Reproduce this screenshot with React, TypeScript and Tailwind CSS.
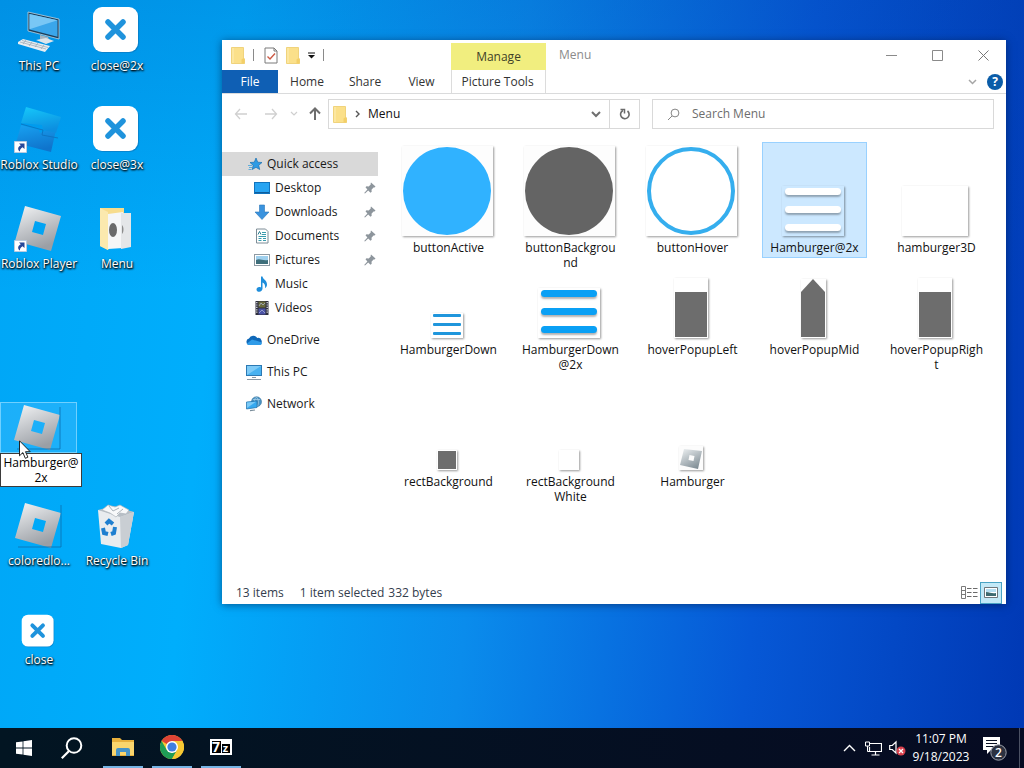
import type { ReactNode } from "react";
import clsx from "clsx";

/* ---------- icons ---------- */

function FolderIcon({ className = "w-[14px] h-[17px]" }: { className?: string }) {
  return (
    <svg viewBox="0 0 14 17" className={className} aria-hidden="true">
      <path d="M0.5 0.5h12v10.5l1 1v4.5h-13z" fill="#fbe08a" stroke="#eccb6a" strokeWidth="0.8" />
      <path d="M12.5 11l1 1v4.5h-3v-4z" fill="#f3cf68" />
      <path d="M2 1v15" stroke="#fdeaaa" strokeWidth="1.4" />
    </svg>
  );
}

function TiltedLogo({ studio = false, shortcut = false }: { studio?: boolean; shortcut?: boolean }) {
  return (
    <svg viewBox="0 0 48 48" className="size-12" aria-hidden="true">
      <defs>
        <linearGradient id="player" x1="0" y1="0" x2="0.4" y2="1">
          <stop offset="0" stopColor="#f4f5f6" />
          <stop offset="0.5" stopColor="#c6c9cd" />
          <stop offset="1" stopColor="#9b9fa5" />
        </linearGradient>
        <linearGradient id="studioTop" x1="0" y1="0" x2="0.3" y2="1">
          <stop offset="0" stopColor="#16c8fa" />
          <stop offset="1" stopColor="#0c8fe0" />
        </linearGradient>
        <linearGradient id="studioBase" x1="0" y1="0" x2="0.3" y2="1">
          <stop offset="0" stopColor="#18a2f2" />
          <stop offset="1" stopColor="#0f74cc" />
        </linearGradient>
      </defs>
      {studio ? (
        <>
          <path d="M7 20l18 5 1 3 17-8-6 27L2 38z" fill="url(#studioBase)" />
          <path d="M12 2l35 10-5 16-13-3-1-5-21-2z" fill="url(#studioTop)" />
          <path d="M7 19l18 5 4 1-1 5 16 3" fill="none" stroke="#0c70bc" strokeWidth="0.8" />
        </>
      ) : (
        <path d="M11 2l36 10-10 35L1 37zM21 17l-3 11 11 3 3-11z" fill="url(#player)" fillRule="evenodd" />
      )}
      {!shortcut && !studio && <path d="M47 4v42H4" fill="none" stroke="#0b6fae" strokeWidth="0.8" />}
      {shortcut && (
        <g>
          <path d="M0.500 36.500h12v11h-12z" fill="#fff" stroke="#b9cbe0" />
          <path d="M5 38.500h5.500v5.500l-2-1.800c-2 1.200-2.700 2.600-2.500 4.300-2.500-1.500-2.600-4.800.8-6.300z" fill="#27489a" />
        </g>
      )}
    </svg>
  );
}

function CloseTile({ small = false }: { small?: boolean }) {
  return (
    <svg viewBox="0 0 48 48" className={small ? "size-[34px]" : "size-12"} aria-hidden="true">
      <rect x="2" y="2" width="45" height="45" rx="9" fill="#0b74ba" opacity="0.6" />
      <rect x="1" y="1" width="45" height="45" rx="9" fill="#fff" />
      <path d="M16 16l15 15M31 16L16 31" stroke="#1f93dc" strokeWidth="5.500" strokeLinecap="round" />
    </svg>
  );
}

function ComputerIcon() {
  return (
    <svg viewBox="0 0 48 48" className="size-12" aria-hidden="true">
      <path d="M14 6l31 7v20L14 25z" fill="#1d3d57" stroke="#b9d4e6" strokeWidth="0.8" />
      <path d="M15.500 8l28 6.300v16.500L15.500 23.500z" fill="#3aa6ea" />
      <path d="M15.500 8l28 6.300-28 9z" fill="#79c7f5" />
      <path d="M26 29l8 2 2 5-10-2z" fill="#a7b4bf" />
      <path d="M22 34l10-2 8 3-8 3z" fill="#dfe5ea" />
      <path d="M4 36l5-3 27 7-5 6-27-8z" fill="#e9edf1" />
      <path d="M6 36l26 7M8 34.500l26 7M12 34l-3 4M18 36l-3 4M24 37l-3 4M30 39l-3 4" stroke="#97a5b2" strokeWidth="0.7" />
    </svg>
  );
}

function MenuFolderIcon() {
  return (
    <svg viewBox="0 0 48 48" className="size-12" aria-hidden="true">
      <path d="M8 4h24v39H18l-2 3-8-4z" fill="#f7dc8c" />
      <path d="M8 4l8 4v38l-8-4z" fill="#fbe9ae" />
      <path d="M16 10l15-2v36l-15 1z" fill="#f5f6f7" />
      <path d="M29 9h10v34l-10 2z" fill="#e4e6e8" />
      <ellipse cx="21" cy="26" rx="4" ry="7" fill="#6a6a6a" />
      <path d="M30 21c2 2 2 7 0 9z" fill="#8c8c8c" />
    </svg>
  );
}

function RecycleBinIcon() {
  return (
    <svg viewBox="0 0 48 48" className="size-12" aria-hidden="true">
      <path d="M6 9l36 2-6 33-7 3-20-4z" fill="#e9ecef" />
      <path d="M28 16l14-5-6 33-7 3z" fill="#c9ced3" />
      <path d="M6 9l15-4 21 6-14 5z" fill="#b7bec5" />
      <path d="M10 9l6-5 7 2 5-2 9 5-3 4-6-1-4 4-6-4z" fill="#f8f9fa" stroke="#adb5bc" strokeWidth="0.7" />
      <path d="M17 5l4 5 6-3M25 13l6-5" fill="none" stroke="#98a1aa" strokeWidth="0.8" />
      <g fill="none" stroke="#1f7fd0" strokeWidth="4">
        <path d="M14 23l3-3 4 3" />
        <path d="M23 26l-1 6-3 1" />
        <path d="M16 33l-4-1-1-5" />
      </g>
    </svg>
  );
}

function PinIcon() {
  return (
    <svg viewBox="0 0 12 12" className="size-3" aria-hidden="true">
      <path d="M7 0.500l4.500 4-1 1-1 0-2 2.300.2 2-1.200 1-2.300-2.300L1 11.500l-.8-.5 3.200-3.500L1.500 5.300l1-1 2.200.1 2-2V1.300z" fill="#8d959c" />
    </svg>
  );
}

function Glyph({ children }: { children: ReactNode }) {
  return (
    <svg viewBox="0 0 16 16" className="size-4 shrink-0" aria-hidden="true">
      {children}
    </svg>
  );
}

const glyphs = {
  star: (
    <Glyph>
      <path d="M9 2l1.700 4.200 4.300.3-3.300 2.800 1 4.200L9 11.300 5.200 13.500l1-4.200L3 6.500l4.300-.3z" fill="#2d9be4" stroke="#176fb0" strokeWidth="0.700" />
      <path d="M1 9.500h4M2 11.500h3M1.500 13.500h3" stroke="#4fa8dc" strokeWidth="0.900" />
    </Glyph>
  ),
  desktop: (
    <Glyph>
      <rect x="0.500" y="2.500" width="15" height="11" fill="#27a4f2" stroke="#1173bd" />
      <path d="M1 12.500h14" stroke="#0f5d9d" />
    </Glyph>
  ),
  downloads: (
    <Glyph>
      <path d="M5.500 1h5v7h4.500L8 15.500 1 8h4.500z" fill="#3a93de" stroke="#2a76b8" strokeWidth="0.600" />
    </Glyph>
  ),
  documents: (
    <Glyph>
      <path d="M2.500 1h9l2.500 2.500V15h-11.500z" fill="#fff" stroke="#7d8c96" />
      <path d="M8 4.500h4M8 6.500h4M4.500 8.500h7.500M4.500 10.500h3M4.500 12.500h3M9 10.500h3M9 12.500h3" stroke="#3a9cae" />
      <path d="M4 6.500l1.500-3 1.500 3" stroke="#2c7f91" fill="none" />
    </Glyph>
  ),
  pictures: (
    <Glyph>
      <rect x="0.500" y="2.500" width="15" height="11" fill="#fff" stroke="#8e9aa3" />
      <path d="M2 4h12v8H2z" fill="#9fd0ee" />
      <path d="M2 8c4-2 6 1 12 0v4H2z" fill="#3e6e7a" />
    </Glyph>
  ),
  music: (
    <Glyph>
      <path d="M7 0.500h1.500c.5 3 4.500 3.700 4.500 8 0 1.700-.8 3-2 3.700.6-3-.6-5-2.500-5.700V12.500c0 2-1.500 3.200-3.200 3.200-1.600 0-2.800-.9-2.800-2.300s1.200-2.400 2.800-2.400c.6 0 1.200.1 1.700.4z" fill="#1f8edb" />
    </Glyph>
  ),
  videos: (
    <Glyph>
      <path d="M1.500 1h13v14h-13z" fill="#2e2f3d" />
      <path d="M4.500 1.500h7v6h-7z" fill="#696a3d" />
      <path d="M4.500 8.500h7v6h-7z" fill="#4b52a6" />
      <path d="M2.800 2v12M13.200 2v12" stroke="#e9e9ee" strokeWidth="1.200" strokeDasharray="1.200 1.200" />
      <path d="M5 6l2-3 2 2 2-2M5 13l3-3 3 3" stroke="#b5bddd" strokeWidth="0.700" fill="none" />
    </Glyph>
  ),
  onedrive: (
    <Glyph>
      <path d="M3.500 13A3.300 3.300 0 0 1 3 6.500 4.700 4.700 0 0 1 11.300 6 3.600 3.600 0 0 1 13 13z" fill="#0f68b8" />
      <path d="M6 7.500l7 2c2 .5 3 1.200 2.800 2.200-.2.800-1 1.300-2 1.300H3.500c-1 0-2-.4-2.800-1.300z" fill="#2f9be8" />
    </Glyph>
  ),
  pc: (
    <Glyph>
      <rect x="0.500" y="1.500" width="15" height="10" fill="#48b2f1" stroke="#2c79b3" />
      <path d="M1 2h14L1 11z" fill="#7fcbf7" />
      <path d="M6 13.500h4M1 15.500h14" stroke="#8a99a5" />
    </Glyph>
  ),
  network: (
    <Glyph>
      <circle cx="10.500" cy="5.800" r="5" fill="#4a93c4" stroke="#34729c" strokeWidth="0.600" />
      <path d="M7 3.500h7M10.500 1c-2 2-2 3-2 5M10.500 1c2.500 3 2.500 6 1 9" stroke="#b9dcf0" strokeWidth="0.600" fill="none" />
      <path d="M0.500 6l10.500-1v6.500L.5 13z" fill="#36a9f0" stroke="#2470a8" strokeWidth="0.700" />
      <path d="M1 6.500l9-.8L1 12z" fill="#7ccaf6" />
      <path d="M4 14.700l5-.7" stroke="#7a8d9a" strokeWidth="1.200" />
    </Glyph>
  ),
};

/* ---------- desktop ---------- */

const labelShadow = "[text-shadow:0_1px_2px_#000,1px_1px_2px_#000]";

interface DesktopItemProps {
  label: string;
  className: string;
  children: ReactNode;
}

function DesktopItem({ label, className, children }: DesktopItemProps) {
  return (
    <button type="button" className={clsx("flex flex-col items-center pt-1.5", className)}>
      <span className="flex h-12 items-end pr-[3px]">{children}</span>
      <span className={clsx("mt-1 whitespace-nowrap leading-[15px] text-white", labelShadow)}>{label}</span>
    </button>
  );
}

function DesktopIcons() {
  return (
    <div className="grid w-[156px] grid-cols-2 auto-rows-[99px]">
      <DesktopItem label="This PC" className="col-start-1 row-start-1"><ComputerIcon /></DesktopItem>
      <DesktopItem label="close@2x" className="col-start-2 row-start-1"><CloseTile /></DesktopItem>
      <DesktopItem label="Roblox Studio" className="col-start-1 row-start-2"><TiltedLogo studio shortcut /></DesktopItem>
      <DesktopItem label="close@3x" className="col-start-2 row-start-2"><CloseTile /></DesktopItem>
      <DesktopItem label="Roblox Player" className="col-start-1 row-start-3"><TiltedLogo shortcut /></DesktopItem>
      <DesktopItem label="Menu" className="col-start-2 row-start-3"><MenuFolderIcon /></DesktopItem>
      <div className="col-start-1 row-start-5 flex flex-col items-start pt-1.5">
        <div className="flex h-[51px] w-[77px] justify-center border border-[#6fd0ff] bg-[#37b8fb]/50 pr-[3px]">
          <TiltedLogo />
        </div>
        <textarea
          aria-label="File name"
          rows={2}
          defaultValue={"Hamburger@\n2x"}
          className="block h-[34px] w-[82px] resize-none overflow-hidden border border-[#3b3b3b] bg-white pt-px text-center leading-[15px] text-black outline-none"
        />
      </div>
      <DesktopItem label="coloredlo..." className="col-start-1 row-start-6"><TiltedLogo /></DesktopItem>
      <DesktopItem label="Recycle Bin" className="col-start-2 row-start-6"><RecycleBinIcon /></DesktopItem>
      <DesktopItem label="close" className="col-start-1 row-start-7"><CloseTile small /></DesktopItem>
    </div>
  );
}

/* ---------- explorer window ---------- */

function TitleBar() {
  return (
    <div className="flex h-[30px] items-center">
      <div className="flex w-[229px] items-center gap-2 pl-[9px]">
        <FolderIcon />
        <span className="h-3 w-px bg-[#8a8a8a]" />
        <button type="button" aria-label="Properties" className="ml-0.5">
          <svg viewBox="0 0 14 17" className="h-[17px] w-[14px]" aria-hidden="true">
            <path d="M1 1h9l3 3v12H1z" fill="#fff" stroke="#7b7b7b" />
            <path d="M10 1v3h3" fill="none" stroke="#7b7b7b" />
            <path d="M3.500 9.500l2.500 2.500 5-5.500" fill="none" stroke="#cc5a45" strokeWidth="1.400" />
          </svg>
        </button>
        <button type="button" aria-label="New folder"><FolderIcon /></button>
        <button type="button" aria-label="Customize Quick Access Toolbar">
          <svg viewBox="0 0 7 7" className="size-[7px]" aria-hidden="true">
            <path d="M0 1h7" stroke="#111" />
            <path d="M0 3h7L3.500 6.500z" fill="#111" />
          </svg>
        </button>
        <span className="h-3 w-px bg-[#8a8a8a]" />
      </div>
      <div className="mt-[3px] flex h-[27px] w-[95px] items-center justify-center bg-[#f1ee7f] text-[#3f3f28]">Manage</div>
      <h1 className="ml-[13px] flex-1 text-[#8b8b8b]">Menu</h1>
      <button type="button" aria-label="Minimize" className="flex w-[46px] justify-center">
        <svg viewBox="0 0 11 11" className="size-[11px]" aria-hidden="true"><path d="M0 5.500h11" stroke="#8a8a8a" /></svg>
      </button>
      <button type="button" aria-label="Maximize" className="flex w-[46px] justify-center">
        <svg viewBox="0 0 11 11" className="size-[11px]" aria-hidden="true"><path d="M0.500 0.500h10v10h-10z" fill="none" stroke="#8a8a8a" /></svg>
      </button>
      <button type="button" aria-label="Close" className="flex w-[46px] justify-center">
        <svg viewBox="0 0 11 11" className="size-[11px]" aria-hidden="true"><path d="M0.500 0.500l10 10M10.500 0.500l-10 10" stroke="#777" /></svg>
      </button>
    </div>
  );
}

function RibbonTabs() {
  return (
    <div className="flex h-6 items-stretch border-b border-[#dadbdc] text-[#333]">
      <button type="button" className="w-14 bg-[#0f5fb4] text-white">File</button>
      <button type="button" className="w-[58px]">Home</button>
      <button type="button" className="w-[58px]">Share</button>
      <button type="button" className="w-[57px] pr-0.5">View</button>
      <button type="button" className="w-[95px] border-x border-[#dcdcdc] pr-0.5">Picture Tools</button>
      <span className="flex-1" />
      <button type="button" aria-label="Expand the Ribbon" className="mr-[10px]">
        <svg viewBox="0 0 9 6" className="h-1.5 w-[9px]" aria-hidden="true"><path d="M1 1l3.500 3.500L8 1" fill="none" stroke="#a5a5a5" strokeWidth="1.500" /></svg>
      </button>
      <button type="button" aria-label="Help" className="mr-[3px]">
        <span className="flex size-4 items-center justify-center rounded-full bg-[#0a5ca8] font-bold leading-4 text-white">?</span>
      </button>
    </div>
  );
}

function AddressRow() {
  return (
    <div className="flex h-10 items-center pr-3">
      <div className="flex w-[106px] items-center pl-3">
        <button type="button" aria-label="Back">
          <svg viewBox="0 0 14 14" className="size-[14px]" aria-hidden="true"><path d="M6 2L1.500 7 6 12M2 7h11" fill="none" stroke="#d0d0d0" strokeWidth="1.300" /></svg>
        </button>
        <button type="button" aria-label="Forward" className="ml-4">
          <svg viewBox="0 0 14 14" className="size-[14px]" aria-hidden="true"><path d="M8 2l4.500 5L8 12M12 7H1" fill="none" stroke="#d0d0d0" strokeWidth="1.300" /></svg>
        </button>
        <button type="button" aria-label="Recent locations" className="ml-3">
          <svg viewBox="0 0 8 6" className="h-1.5 w-2" aria-hidden="true"><path d="M1 1l3 3 3-3" fill="none" stroke="#cfcfcf" strokeWidth="1.200" /></svg>
        </button>
        <button type="button" aria-label="Up" className="ml-[10px]">
          <svg viewBox="0 0 14 14" className="size-[14px]" aria-hidden="true"><path d="M2 6.500L7 1.500l5 5M7 2v11" fill="none" stroke="#6d6d6d" strokeWidth="2" /></svg>
        </button>
      </div>
      <div className="flex h-[30px] flex-[310_1_0%] border border-[#d9d9d9]">
        <div className="flex flex-1 items-center pl-1">
          <FolderIcon />
          <svg viewBox="0 0 5 8" className="ml-2 h-2 w-[5px]" aria-hidden="true"><path d="M1 1l3 3-3 3" fill="none" stroke="#555" strokeWidth="1.400" /></svg>
          <button type="button" className="ml-2 text-[#111]">Menu</button>
          <span className="flex-1" />
          <button type="button" aria-label="Previous locations" className="mr-2">
            <svg viewBox="0 0 10 7" className="h-[7px] w-[10px]" aria-hidden="true"><path d="M1 1l4 4 4-4" fill="none" stroke="#6f6f6f" strokeWidth="2" /></svg>
          </button>
        </div>
        <button type="button" aria-label="Refresh" className="flex w-[30px] items-center justify-center border-l border-[#d9d9d9]">
          <svg viewBox="0 0 12 12" className="size-3" aria-hidden="true">
            <path d="M4 2.500A4.300 4.300 0 1 0 8.500 3" fill="none" stroke="#6b6b6b" strokeWidth="1.600" />
            <path d="M1.500 1.500h4V5.500" fill="none" stroke="#6b6b6b" strokeWidth="1.500" />
          </svg>
        </button>
      </div>
      <label className="ml-3 flex h-[30px] flex-[326_1_0%] items-center border border-[#d9d9d9] pl-[14px]">
        <svg viewBox="0 0 13 13" className="size-[13px]" aria-hidden="true">
          <circle cx="8" cy="5" r="3.900" fill="none" stroke="#858585" />
          <path d="M5 8L1 12" stroke="#858585" />
        </svg>
        <input type="search" aria-label="Search Menu" placeholder="Search Menu" className="ml-3 min-w-0 flex-1 bg-transparent outline-none placeholder:text-[#6d6d6d]" />
      </label>
    </div>
  );
}

const pinnedPlaces = [
  { name: "Desktop", icon: glyphs.desktop, pinned: true },
  { name: "Downloads", icon: glyphs.downloads, pinned: true },
  { name: "Documents", icon: glyphs.documents, pinned: true },
  { name: "Pictures", icon: glyphs.pictures, pinned: true },
  { name: "Music", icon: glyphs.music, pinned: false },
  { name: "Videos", icon: glyphs.videos, pinned: false },
];

const rootPlaces = [
  { name: "OneDrive", icon: glyphs.onedrive },
  { name: "This PC", icon: glyphs.pc },
  { name: "Network", icon: glyphs.network },
];

function Sidebar() {
  return (
    <nav aria-label="Navigation pane" className="flex w-[156px] shrink-0 flex-col gap-2 pt-[18px] text-[#1a1a1a]">
      <ul>
        <li>
          <a href="#quick" className="flex h-6 items-center gap-1 bg-[#d9d9d9] pl-[25px]">{glyphs.star}Quick access</a>
        </li>
        {pinnedPlaces.map((place) => (
          <li key={place.name}>
            <a href="#place" className="flex h-6 items-center gap-[5px] pl-8 pr-0.5">
              {place.icon}
              <span className="flex-1">{place.name}</span>
              {place.pinned && <PinIcon />}
            </a>
          </li>
        ))}
      </ul>
      {rootPlaces.map((place) => (
        <a key={place.name} href="#place" className="flex h-6 items-center gap-[5px] pl-6">
          {place.icon}
          {place.name}
        </a>
      ))}
    </nav>
  );
}

function Frame({ className, children }: { className: string; children?: ReactNode }) {
  return <div className={clsx("shadow-[1px_1px_2px_rgba(0,0,0,0.4)]", className)}>{children}</div>;
}

function Bars({ className, bar }: { className: string; bar: string }) {
  return (
    <Frame className={clsx("flex flex-col", className)}>
      <span className={bar} />
      <span className={bar} />
      <span className={bar} />
    </Frame>
  );
}

interface FileEntry {
  name: string;
  short?: boolean;
  selected?: boolean;
  thumb: ReactNode;
}

const bigBar = "h-[7px] rounded-sm shadow-[0_2px_2px_rgba(0,0,0,0.3)]";

const files: FileEntry[] = [
  {
    name: "buttonActive",
    thumb: <Frame className="bg-[#fdfdfd] p-px pr-0.5"><div className="size-[88px] rounded-full bg-[#30b2ff]" /></Frame>,
  },
  {
    name: "buttonBackgrou\nnd",
    thumb: <Frame className="bg-[#fdfdfd] p-px pr-0.5"><div className="size-[88px] rounded-full bg-[#646464]" /></Frame>,
  },
  {
    name: "buttonHover",
    thumb: <Frame className="bg-white p-px pr-0.5"><div className="size-[88px] rounded-full border-4 border-[#35aeee]" /></Frame>,
  },
  {
    name: "Hamburger@2x",
    selected: true,
    thumb: <Bars className="h-[50px] w-[62px] gap-[11px] px-[3px] pt-0.5" bar={clsx(bigBar, "bg-white")} />,
  },
  { name: "hamburger3D", thumb: <Frame className="h-[50px] w-[66px] bg-white" /> },
  {
    name: "HamburgerDown",
    short: true,
    thumb: <Bars className="h-[25px] w-8 gap-1.5 bg-white px-0.5 pt-px" bar="h-[3px] rounded-[1px] bg-[#1f96dc]" />,
  },
  {
    name: "HamburgerDown\n@2x",
    short: true,
    thumb: <Bars className="h-[50px] w-[62px] gap-[11px] bg-white px-[3px] pt-0.5" bar={clsx(bigBar, "bg-[#0aa0f5]")} />,
  },
  {
    name: "hoverPopupLeft",
    short: true,
    thumb: <Frame className="bg-white px-px pb-px pt-[14px]"><div className="h-[45px] w-8 bg-[#6d6d6d]" /></Frame>,
  },
  {
    name: "hoverPopupMid",
    short: true,
    thumb: (
      <Frame className="bg-white pb-px pr-px">
        <svg viewBox="0 0 24 58" className="h-[58px] w-6" aria-hidden="true"><path d="M12 0l12 13v45H0V13z" fill="#6d6d6d" /></svg>
      </Frame>
    ),
  },
  {
    name: "hoverPopupRigh\nt",
    short: true,
    thumb: <Frame className="bg-white px-px pb-px pt-[14px]"><div className="h-[45px] w-8 bg-[#6d6d6d]" /></Frame>,
  },
  {
    name: "rectBackground",
    thumb: <Frame className="bg-white p-px"><div className="size-[18px] bg-[#6d6d6d]" /></Frame>,
  },
  { name: "rectBackground\nWhite", thumb: <Frame className="size-5 bg-white" /> },
  {
    name: "Hamburger",
    thumb: (
      <Frame className="bg-[#fcfcfc]">
        <svg viewBox="0 0 24 24" className="size-6" aria-hidden="true">
          <defs>
            <linearGradient id="smallLogo" x1="0.2" y1="0" x2="0.8" y2="1">
              <stop offset="0" stopColor="#e6eaec" />
              <stop offset="1" stopColor="#7b8991" />
            </linearGradient>
          </defs>
          <path d="M5 3l18 2-4 18-18-4zM10.500 9l-1 5 5 1 1-5z" fill="url(#smallLogo)" fillRule="evenodd" />
        </svg>
      </Frame>
    ),
  },
];

function FileTile({ file }: { file: FileEntry }) {
  return (
    <button
      type="button"
      className={clsx(
        "flex flex-col items-center self-start pb-[3px]",
        file.selected && "bg-[#cce8ff] outline outline-1 -outline-offset-1 outline-[#99d1ff]",
      )}
    >
      <span className={clsx("flex items-end pb-0.5 pr-[3px]", file.short ? "h-[66px]" : "h-24")}>{file.thumb}</span>
      <span className="mt-0.5 whitespace-pre text-center leading-[15px] text-[#111]">{file.name}</span>
    </button>
  );
}

function StatusBar() {
  return (
    <footer className="flex h-[23px] items-center pl-[14px] pr-1 text-[#333d4d]">
      <span>13 items</span>
      <span className="ml-4">1 item selected</span>
      <span className="ml-1 flex-1">332 bytes</span>
      <button type="button" aria-label="Details view" className="mr-0.5">
        <svg viewBox="0 0 17 13" className="h-[13px] w-[17px]" aria-hidden="true">
          <path d="M0.500 0.500h4v12h-4zM0.500 4.500h4M0.500 8.500h4" fill="none" stroke="#7a7a7a" />
          <path d="M6 2.500h4.500M12 2.500h4.500M6 6.500h4.500M12 6.500h4.500M6 10.500h4.500M12 10.500h4.500" stroke="#6a6a6a" />
        </svg>
      </button>
      <button type="button" aria-label="Large icons view" className="flex h-[22px] w-[22px] items-center justify-center border border-[#4aa3c4] bg-[#c3e9f7]">
        <svg viewBox="0 0 14 11" className="h-[11px] w-[14px]" aria-hidden="true">
          <path d="M0.500 0.500h13v10h-13z" fill="#fff" stroke="#6e767b" />
          <path d="M2 2h10v3H2z" fill="#b6dff2" />
          <path d="M2 5c4 0 6 2 10 1v3H2z" fill="#3d6a70" />
        </svg>
      </button>
    </footer>
  );
}

function ExplorerWindow() {
  return (
    <section aria-label="Menu" className="absolute left-[222px] right-[18px] top-10 flex min-h-[564px] flex-col bg-white shadow-[0_1px_8px_rgba(0,20,60,0.55)]">
      <TitleBar />
      <RibbonTabs />
      <AddressRow />
      <div className="flex flex-1">
        <Sidebar />
        <div className="grid flex-1 auto-rows-min grid-cols-[repeat(auto-fill,105px)] gap-x-[17px] gap-y-px pl-[18px] pt-2">
          {files.map((file) => (
            <FileTile key={file.name} file={file} />
          ))}
        </div>
      </div>
      <StatusBar />
    </section>
  );
}

/* ---------- taskbar ---------- */

interface TaskButtonProps {
  label: string;
  running?: boolean;
  children: ReactNode;
}

function TaskButton({ label, running = false, children }: TaskButtonProps) {
  return (
    <button
      type="button"
      aria-label={label}
      className={clsx("flex flex-col items-center justify-between", running ? "w-[49px]" : "w-12")}
    >
      <span className="flex flex-1 items-center">{children}</span>
      {running && <span className="h-0.5 w-10 bg-[#76b4e4]" />}
    </button>
  );
}

function Taskbar() {
  return (
    <footer className="flex h-10 bg-linear-to-r from-[#021522] to-[#060b22] text-white">
      <div className="mr-0.5 flex">
        <TaskButton label="Start">
          <svg viewBox="0 0 16 16" className="size-4" aria-hidden="true">
            <path d="M0 2.300l6.600-.9v6.200H0zM7.400 1.300L16 0v7.600H7.400zM0 8.400h6.600v6.200L0 13.700zM7.400 8.400H16V16l-8.600-1.300z" fill="#fff" />
          </svg>
        </TaskButton>
        <TaskButton label="Search">
          <svg viewBox="0 0 22 22" className="size-[22px]" aria-hidden="true">
            <circle cx="13" cy="8.500" r="7.300" fill="none" stroke="#fff" strokeWidth="2" />
            <path d="M8 14L0.800 21.200" stroke="#fff" strokeWidth="2.200" />
          </svg>
        </TaskButton>
      </div>
      <TaskButton label="File Explorer" running>
        <svg viewBox="0 0 22 20" className="h-5 w-[22px]" aria-hidden="true">
          <path d="M0 1h8l2 2h12v16H0z" fill="#e9b13c" />
          <path d="M0 5h22v13H0z" fill="#fbd66d" />
          <path d="M4 19v-6a2 2 0 0 1 2-2h10a2 2 0 0 1 2 2v6h-4v-4H8v4z" fill="#4794c8" />
        </svg>
      </TaskButton>
      <TaskButton label="Google Chrome" running>
        <svg viewBox="0 0 24 24" className="size-6" aria-hidden="true">
          <circle cx="12" cy="12" r="12" fill="#f7c833" />
          <path d="M12 12L1.600 6A12 12 0 0 1 22.400 6z" fill="#dd4335" />
          <path d="M1.600 6A12 12 0 0 0 12 24l5.200-9-5.200 3-5.200-3z" fill="#1f9d56" />
          <path d="M12 6h10.400A12 12 0 0 1 12 24l5.200-9z" fill="#f7c833" />
          <circle cx="12" cy="12" r="6" fill="#fff" />
          <circle cx="12" cy="12" r="4.600" fill="#3f7fe0" />
        </svg>
      </TaskButton>
      <TaskButton label="7-Zip" running>
        <span className="flex h-4 w-[22px] items-end gap-px bg-white p-0.5 font-bold">
          <span className="h-3 w-[9px] bg-black text-[14px] leading-3">7</span>
          <span className="h-[9px] w-2 bg-black text-[11px] leading-[7px]">z</span>
        </span>
      </TaskButton>
      <span className="flex-1" />
      <div className="flex items-center">
        <button type="button" aria-label="Show hidden icons">
          <svg viewBox="0 0 13 8" className="h-2 w-[13px]" aria-hidden="true"><path d="M1 7l5.500-5.500L12 7" fill="none" stroke="#fff" strokeWidth="1.400" /></svg>
        </button>
        <svg viewBox="0 0 17 15" className="ml-[9px] h-[15px] w-[17px]" role="img" aria-label="Network">
          <path d="M5 2.500h11.500v8H4.500V6M10.500 10.500v3M6.500 14h8" fill="none" stroke="#fff" strokeWidth="1.200" />
          <path d="M0.500 1h4v4h-4zM2.500 5v5.500H5" fill="none" stroke="#fff" />
        </svg>
        <svg viewBox="0 0 17 16" className="ml-[7px] h-4 w-[17px]" role="img" aria-label="Volume muted">
          <path d="M0.700 5.500h2.600L7 2v11L3.300 9.500H.7z" fill="none" stroke="#fff" strokeWidth="1.200" />
          <circle cx="12" cy="11" r="4.500" fill="#d8404d" />
          <path d="M10 9l4 4M14 9l-4 4" stroke="#fff" strokeWidth="1.300" />
        </svg>
        <time className="ml-1.5 w-[58px] text-center leading-[18px]">
          <span className="block whitespace-nowrap">11:07 PM</span>
          <span className="block whitespace-nowrap">9/18/2023</span>
        </time>
        <button type="button" aria-label="Notifications" className="ml-3 mr-3">
          <svg viewBox="0 0 25 25" className="size-[25px]" aria-hidden="true">
            <path d="M1 1h17v13H9l-4 4v-4H1z" fill="#fff" />
            <path d="M4 4.500h11M4 7.500h11M4 10.500h8" stroke="#0a1224" strokeWidth="1.200" />
            <circle cx="16.500" cy="16.500" r="7.700" fill="#2c3140" stroke="#9da1ab" />
            <text x="16.500" y="21" textAnchor="middle" fontSize="12" fontWeight="600" fill="#fff">2</text>
          </svg>
        </button>
        <span className="mr-1 h-10 w-px bg-[#4b5163]" />
      </div>
    </footer>
  );
}

export default function App() {
  return (
    <div className="relative flex min-h-screen flex-col bg-[linear-gradient(180deg,rgba(0,60,160,0.2)_0%,rgba(0,60,160,0)_38%),linear-gradient(96deg,#00a6f6_0%,#00aefc_22%,#0a8cec_48%,#0658d6_74%,#0038b4_100%)] font-['Open_Sans','Noto_Sans',sans-serif] text-[12px] leading-4">
      <main className="flex-1">
        <DesktopIcons />
        <ExplorerWindow />
      </main>
      <Taskbar />
      <svg viewBox="0 0 12 19" className="pointer-events-none absolute left-[19px] top-[440px] h-[19px] w-3" aria-hidden="true">
        <path d="M0.500 0.800v15l3.400-3.200 2.400 5.700 2.600-1.100-2.400-5.500h4.700z" fill="#fff" stroke="#111" strokeWidth="0.900" />
      </svg>
    </div>
  );
}
